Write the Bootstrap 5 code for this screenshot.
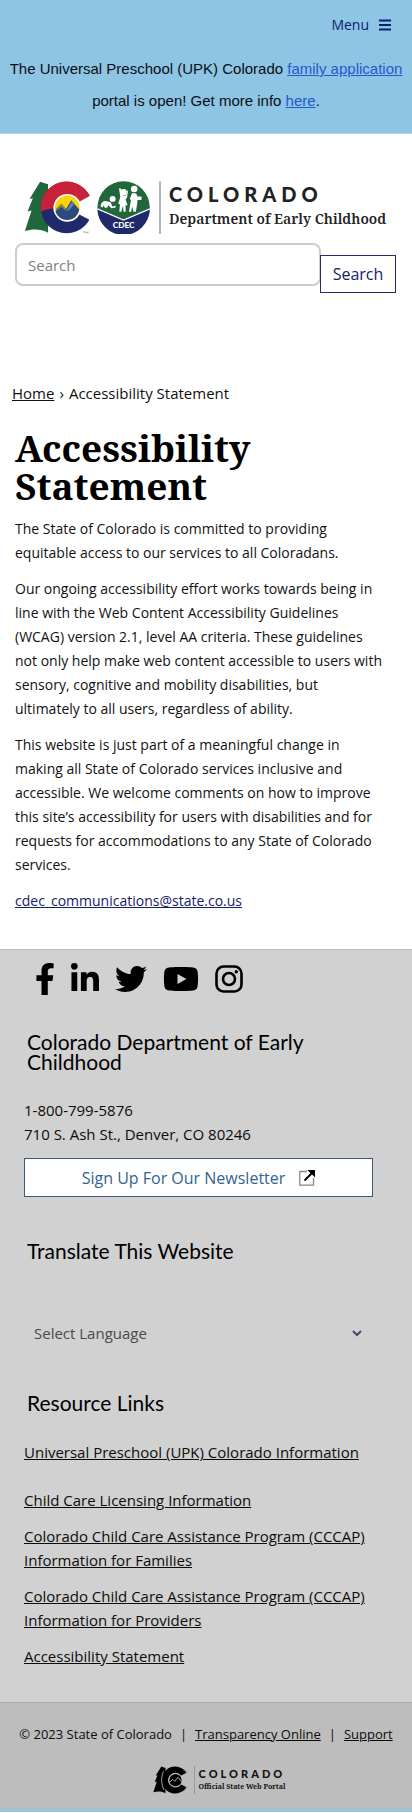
<!DOCTYPE html>
<html lang="en">
<head>
<meta charset="utf-8">
<meta name="viewport" content="width=device-width, initial-scale=1">
<title>Accessibility Statement | Colorado Department of Early Childhood</title>
<link rel="stylesheet" href="https://cdn.jsdelivr.net/npm/bootstrap@5.3.0/dist/css/bootstrap.min.css">
<style>
  body { font-family: "Open Sans", sans-serif; font-size: 14px; line-height: 24px; color: #111; background: #fff; }
  .topbar { background: #8ec5e5; border-bottom: 1px solid #b9d6e6; }
  .menu-btn { color: #0b1f70; font-size: 14px; line-height: 24px; padding: 13px 21px 12px; background: none; border: 0; gap: 10px; }
  .notice { font-family: "Liberation Sans", sans-serif; font-size: 15px; line-height: 32px; padding: 4px 4px 16px; margin: 0; color: #0a0f14; }
  .notice a { color: #2359cf; }
  .brand { padding: 47px 16px 0 24px; gap: 8px; color: #222; }
  .brand svg { width: 127px; height: 53px; }
  .brand-text { border-left: 2px solid #b5b5b5; height: 53px; padding-left: 8px; }
  .wordmark { font-family: Lato, sans-serif; font-weight: 900; font-size: 20px; line-height: 26px; letter-spacing: 5px; }
  .dept { font-family: "Noto Serif", serif; font-weight: 600; font-size: 14px; line-height: 24px; white-space: nowrap; }
  .search { padding: 9px 16px 0 15px; }
  .search .form-control { height: 43px; border: 2px solid #ccc; border-radius: 8px; font-size: 15px; padding: 0 11px; }
  .search .form-control::placeholder { color: #808080; }
  .search .btn { margin-top: 12px; margin-left: -1px; width: 76px; height: 38px; border: 1px solid #29296f; border-radius: 0; color: #15206b; background: #fff; font-size: 16px; padding: 0; flex: none; }
  .crumbs { padding: 88px 12px 0; gap: 5px; font-size: 15px; }
  .crumbs a, .links a, .legal a { color: inherit; }
  .content { padding: 24px 26px 36px 15px; }
  .content h1 { font-family: "Noto Serif", serif; font-weight: 700; font-size: 37px; line-height: 38px; color: #000; margin: 0 0 12px; }
  .content p { margin: 0 0 12px; }
  .content p:last-child { margin: 0; }
  .content a { color: #15206b; }
  .site-foot { background: #d1d1d1; border-top: 1px solid #bbb; font-size: 15px; padding: 12px 24px 34px; color: #0c0c0c; }
  .social { padding-left: 11px; height: 34px; }
  .social a { color: #000; display: flex; }
  .site-foot h2 { font-family: Lato, sans-serif; font-size: 21px; line-height: 20px; font-weight: 400; margin: 36px 0 26px; padding-left: 3px; color: #000; }
  .news { height: 39px; margin: 12px 15px 8px 0; background: #fff; border: 1px solid #3f5875; border-radius: 0; color: #33648f; font-size: 16px; gap: 14px; padding: 0; }
  .lang { margin: 52px 15px 40px 0; }
  .site-foot .form-select { height: 40px; border: 0; background-color: transparent; color: #4a4a4a; font-size: 15px; padding: 0 10px; background-size: 12px; background-position: right 10px center;
    background-image: url("data:image/svg+xml,%3csvg xmlns='http://www.w3.org/2000/svg' viewBox='0 0 12 12'%3e%3cpath fill='none' stroke='%23404a68' stroke-width='2' d='M2 4l4 4 4-4'/%3e%3c/svg%3e"); }
  .links { margin: 27px 0 0; gap: 12px; }
  .links li:first-child { margin-bottom: 12px; }
  .legal { background: #bdbdbd; border-top: 1px solid #aaa; font-size: 13px; padding: 19px 12px 14px; color: #0c0c0c; border-bottom: 4px solid #9fc3d6; }
  .legal-row { gap: 8px; white-space: nowrap; }
  .portal { margin-top: 20px; padding-left: 26px; gap: 5px; color: #111; }
  .portal svg { width: 36px; height: 28px; }
  .portal-text { border-left: 1px solid #999; padding-left: 4px; height: 28px; }
  .portal .wordmark { font-size: 11px; line-height: 15px; letter-spacing: 3px; }
  .portal .dept { font-size: 7px; line-height: 11px; font-weight: 700; }
</style>
</head>
<body>
<header>
  <div class="topbar">
    <div class="d-flex justify-content-end">
      <button class="menu-btn d-flex align-items-center" type="button">Menu
        <svg width="12" height="12" viewBox="0 0 12 12" aria-hidden="true"><path d="M0 1.5h12M0 6h12M0 10.5h12" stroke="#0b1f70" stroke-width="2"/></svg>
      </button>
    </div>
    <p class="notice text-center">The Universal Preschool (UPK) Colorado <a href="#">family application</a> portal is open! Get more info <a href="#">here</a>.</p>
  </div>
  <div class="brand d-flex">
    <svg viewBox="44 30 382 160" aria-label="Colorado CDEC" class="flex-shrink-0">
      <path fill="#22663c" d="M92 32L60 84l10-2-16 40 12-3-20 62c24-8 50-6 70 5V40z"/>
      <circle cx="172" cy="110" r="78" fill="#20296c"/>
      <path fill="#c9213a" d="M95 122A78 78 0 1 1 250 110L172 118C142 108 118 112 95 122z"/>
      <path fill="#fff" d="M175 112L262 64v94z"/>
      <circle cx="174" cy="111" r="42" fill="#fff"/>
      <circle cx="174" cy="111" r="37" fill="#fcd30a"/>
      <path fill="#7f8c3a" d="M138 116l18-18 20 22 14-10-12 30h-26z"/>
      <path fill="#2b4a83" d="M138 122l18-14 12 10 18-30 24 28a37 37 0 0 1-72 6z"/>
      <path fill="#5f83a9" d="M170 122l18-30 6 9-12 14z"/>
      <path d="M222 183h6m-3 0v5m6 0v-5l3 4 3-4v5" stroke="#333" fill="none"/>
      <circle cx="344" cy="110" r="79" fill="#22663c"/>
      <path fill="#20296c" d="M265 114l79 32 79-32a79 79 0 0 1-158 0z"/>
      <path fill="none" stroke="#fff" stroke-width="4" d="M265 114l79 34 79-34"/>
      <g fill="#fff"><circle cx="311" cy="84" r="9"/><path d="M275 108c-1-12 8-20 18-17l12 3 5 13 10-2v5l-13 2-9-9-4 8h-7l-3-7-4 6z"/>
      <circle cx="344" cy="64" r="10"/><path d="M330 52l6 1v10l8 12 8-2 2-14 3 1-2 18-5 8 6 17h-6v20h-6l-2-18-5 18h-6l2-22-5-3 6-20z"/>
      <circle cx="376" cy="54" r="10"/><path d="M370 66l12 2 4 9h12v10h-12l-1 12-4 24h-7l-4-16-3 16h-7l6-34-3-6z"/></g>
      <text x="344" y="173" text-anchor="middle" fill="#fff" font-family="Lato, sans-serif" font-weight="900" font-size="25">CDEC</text>
    </svg>
    <div class="brand-text">
      <div class="wordmark">COLORADO</div>
      <div class="dept">Department of Early Childhood</div>
    </div>
  </div>
  <form class="search d-flex align-items-start">
    <input class="form-control" type="search" placeholder="Search" aria-label="Search">
    <button class="btn" type="submit">Search</button>
  </form>
</header>
<nav class="crumbs d-flex" aria-label="Breadcrumb"><a href="#">Home</a><span>›</span><span>Accessibility Statement</span></nav>
<main class="content">
  <h1>Accessibility Statement</h1>
  <p>The State of Colorado is committed to providing equitable access to our services to all Coloradans.</p>
  <p>Our ongoing accessibility effort works towards being in line with the Web Content Accessibility Guidelines (WCAG) version 2.1, level AA criteria. These guidelines not only help make web content accessible to users with sensory, cognitive and mobility disabilities, but ultimately to all users, regardless of ability.</p>
  <p>This website is just part of a meaningful change in making all State of Colorado services inclusive and accessible. We welcome comments on how to improve this site’s accessibility for users with disabilities and for requests for accommodations to any State of Colorado services.</p>
  <p><a href="#">cdec_communications@state.co.us</a></p>
</main>
<footer>
  <div class="site-foot">
    <div class="social d-flex align-items-center">
      <a href="#" aria-label="Facebook"><svg width="20" height="32" viewBox="0 0 320 512"><path d="M279.14 288l14.22-92.66h-88.91v-60.13c0-25.35 12.42-50.06 52.24-50.06h40.42V6.26S260.43 0 225.36 0c-73.22 0-121.08 44.38-121.08 124.72v70.62H22.89V288h81.39v224h100.17V288z"/></svg></a>
      <a href="#" aria-label="LinkedIn" class="ms-3"><svg width="28" height="32" viewBox="0 0 448 512"><path d="M100.28 448H7.4V148.9h92.88zM53.79 108.1C24.09 108.1 0 83.5 0 53.8a53.79 53.79 0 0 1 107.58 0c0 29.7-24.1 54.3-53.79 54.3zM447.9 448h-92.68V302.4c0-34.7-.7-79.2-48.29-79.2-48.29 0-55.69 37.7-55.69 76.7V448h-92.78V148.9h89.08v40.8h1.3c12.4-23.5 42.69-48.3 87.88-48.3 94 0 111.28 61.9 111.28 142.3V448z"/></svg></a>
      <a href="#" aria-label="Twitter" class="ms-3"><svg width="32" height="32" viewBox="0 0 512 512"><path d="M459.37 151.716c.325 4.548.325 9.097.325 13.645 0 138.72-105.583 298.558-298.558 298.558-59.452 0-114.68-17.219-161.137-47.106 8.447.974 16.568 1.299 25.34 1.299 49.055 0 94.213-16.568 130.274-44.832-46.132-.975-84.792-31.188-98.112-72.772 6.498.974 12.995 1.624 19.818 1.624 9.421 0 18.843-1.3 27.614-3.573-48.081-9.747-84.143-51.98-84.143-102.985v-1.299c13.969 7.797 30.214 12.67 47.431 13.319-28.264-18.843-46.781-51.005-46.781-87.391 0-19.492 5.197-37.36 14.294-52.954 51.655 63.675 129.3 105.258 216.365 109.807-1.624-7.797-2.599-15.918-2.599-24.04 0-57.828 46.782-104.934 104.934-104.934 30.213 0 57.502 12.67 76.67 33.137 23.715-4.548 46.456-13.32 66.599-25.34-7.798 24.366-24.366 44.833-46.132 57.827 21.117-2.273 41.584-8.122 60.426-16.243-14.292 20.791-32.161 39.308-52.628 54.253z"/></svg></a>
      <a href="#" aria-label="YouTube" class="ms-3"><svg width="36" height="32" viewBox="0 0 576 512"><path d="M549.655 124.083c-6.281-23.65-24.787-42.276-48.284-48.597C458.781 64 288 64 288 64S117.22 64 74.629 75.486c-23.497 6.322-42.003 24.947-48.284 48.597C14.932 166.95 14.932 256.4 14.932 256.4s0 89.438 11.413 132.305c6.281 23.65 24.787 41.5 48.284 47.821C117.22 448 288 448 288 448s170.781 0 213.371-11.486c23.497-6.321 42.003-24.171 48.284-47.821 11.412-42.867 11.412-132.305 11.412-132.305s0-89.438-11.412-132.305zM232.145 337.591V175.185l142.739 81.205z"/></svg></a>
      <a href="#" aria-label="Instagram" class="ms-3"><svg width="28" height="28" viewBox="0 0 28 28"><rect x="1.5" y="1.5" width="25" height="25" rx="7" fill="none" stroke="#000" stroke-width="2.6"/><circle cx="14" cy="14" r="6" fill="none" stroke="#000" stroke-width="2.6"/><circle cx="21.3" cy="6.7" r="1.7"/></svg></a>
    </div>
    <h2>Colorado Department of Early Childhood</h2>
    <div>1-800-799-5876<br>710 S. Ash St., Denver, CO 80246</div>
    <div class="d-flex">
      <button class="btn news flex-fill d-flex align-items-center justify-content-center" type="button">Sign Up For Our Newsletter
        <svg width="16" height="16" viewBox="0 0 16 16" fill="none" aria-hidden="true"><path d="M8 1.5H.8v13.7h13.7V8" stroke="#888" stroke-width="1.3"/><path d="M5.5 10.5L13 3" stroke="#000" stroke-width="2"/><path fill="#000" d="M8.5 0H16v7.5l-2.4-2.4-2.7-2.7z"/></svg>
      </button>
    </div>
    <h2>Translate This Website</h2>
    <div class="lang">
      <select class="form-select" aria-label="Select Language"><option>Select Language</option></select>
    </div>
    <h2>Resource Links</h2>
    <ul class="links list-unstyled d-flex flex-column">
      <li><a href="#">Universal Preschool (UPK) Colorado Information</a></li>
      <li><a href="#">Child Care Licensing Information</a></li>
      <li><a href="#">Colorado Child Care Assistance Program (CCCAP) Information for Families</a></li>
      <li><a href="#">Colorado Child Care Assistance Program (CCCAP) Information for Providers</a></li>
      <li><a href="#">Accessibility Statement</a></li>
    </ul>
  </div>
  <div class="legal">
    <div class="legal-row d-flex justify-content-center"><span>© 2023 State of Colorado</span><span>|</span><a href="#">Transparency Online</a><span>|</span><a href="#">Support</a></div>
    <div class="portal d-flex justify-content-center">
      <svg viewBox="44 30 208 160" aria-hidden="true">
        <path d="M92 32L60 84l10-2-16 40 12-3-20 62c24-8 50-6 70 5V40z"/>
        <path d="M238 68a78 78 0 1 0 0 84l-34-18a40 40 0 1 1 0-48z"/>
        <circle cx="174" cy="111" r="36"/>
        <path fill="none" stroke="#bdbdbd" stroke-width="5" d="M104 60c-14 34-14 70 4 108M140 124l18-18 12 12 18-24 20 24"/>
        <circle cx="174" cy="111" r="40" fill="none" stroke="#bdbdbd" stroke-width="5"/>
      </svg>
      <div class="portal-text">
        <div class="wordmark">COLORADO</div>
        <div class="dept">Official State Web Portal</div>
      </div>
    </div>
  </div>
</footer>
<script src="https://cdn.jsdelivr.net/npm/bootstrap@5.3.0/dist/js/bootstrap.bundle.min.js"></script>
</body>
</html>
